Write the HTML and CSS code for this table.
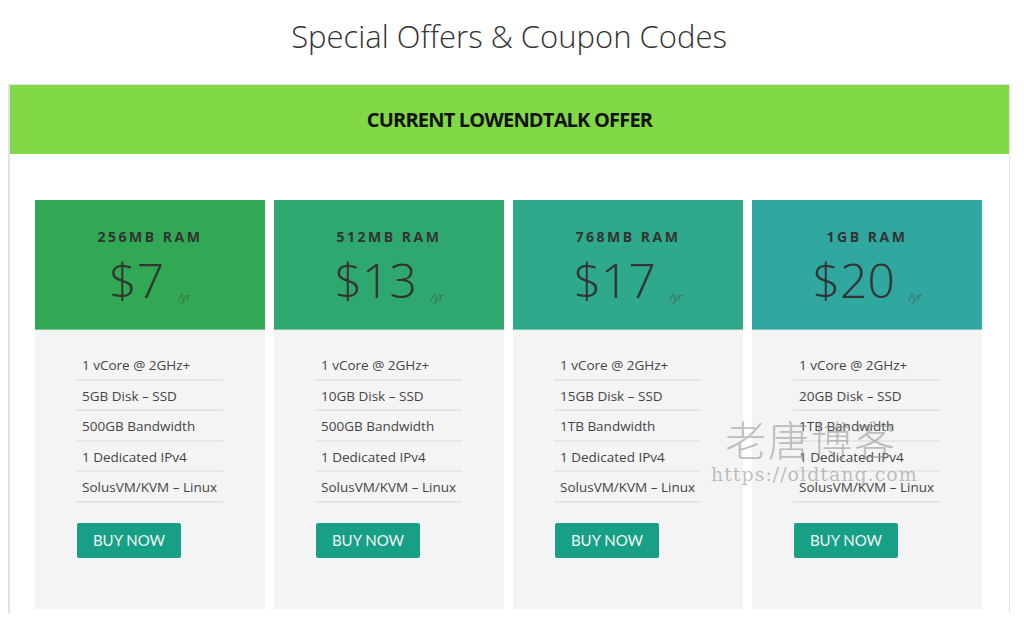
FILE: index.html
```html
<!DOCTYPE html>
<html>
<head>
<meta charset="utf-8">
<link rel="stylesheet" href="styles.css">
</head>
<body>
<div class="page">
  <h1 class="title">Special Offers &amp; Coupon Codes</h1>
  <div class="offer-box">
    <div class="band">CURRENT LOWENDTALK OFFER</div>
    <div class="plans">
      <div class="plan">
        <div class="plan-head c1">
          <div class="plan-name">256MB RAM</div>
          <div class="plan-price"><span class="amount">$7</span><span class="per">/yr</span></div>
        </div>
        <div class="plan-body">
          <ul class="features">
            <li>1 vCore @ 2GHz+</li>
            <li>5GB Disk – SSD</li>
            <li>500GB Bandwidth</li>
            <li>1 Dedicated IPv4</li>
            <li>SolusVM/KVM – Linux</li>
          </ul>
          <a class="buy">BUY NOW</a>
        </div>
      </div>
      <div class="plan">
        <div class="plan-head c2">
          <div class="plan-name">512MB RAM</div>
          <div class="plan-price"><span class="amount">$13</span><span class="per">/yr</span></div>
        </div>
        <div class="plan-body">
          <ul class="features">
            <li>1 vCore @ 2GHz+</li>
            <li>10GB Disk – SSD</li>
            <li>500GB Bandwidth</li>
            <li>1 Dedicated IPv4</li>
            <li>SolusVM/KVM – Linux</li>
          </ul>
          <a class="buy">BUY NOW</a>
        </div>
      </div>
      <div class="plan">
        <div class="plan-head c3">
          <div class="plan-name">768MB RAM</div>
          <div class="plan-price"><span class="amount">$17</span><span class="per">/yr</span></div>
        </div>
        <div class="plan-body">
          <ul class="features">
            <li>1 vCore @ 2GHz+</li>
            <li>15GB Disk – SSD</li>
            <li>1TB Bandwidth</li>
            <li>1 Dedicated IPv4</li>
            <li>SolusVM/KVM – Linux</li>
          </ul>
          <a class="buy">BUY NOW</a>
        </div>
      </div>
      <div class="plan">
        <div class="plan-head c4">
          <div class="plan-name">1GB RAM</div>
          <div class="plan-price"><span class="amount">$20</span><span class="per">/yr</span></div>
        </div>
        <div class="plan-body">
          <ul class="features">
            <li>1 vCore @ 2GHz+</li>
            <li>20GB Disk – SSD</li>
            <li>1TB Bandwidth</li>
            <li>1 Dedicated IPv4</li>
            <li>SolusVM/KVM – Linux</li>
          </ul>
          <a class="buy">BUY NOW</a>
        </div>
      </div>
    </div>
  </div>
</div>
<div class="watermark">
  <div class="wm-cn">老唐博客</div>
  <div class="wm-url">https://oldtang.com</div>
</div>
</body>
</html>
```

FILE: styles.css
```css
html, body {
  margin: 0;
  padding: 0;
  background: #fff;
}
body {
  font-family: "Open Sans", "Liberation Sans", sans-serif;
  color: #444;
  overflow: hidden;
}
.page {
  width: 1002px;
  margin-left: 8px;
}
.title {
  margin: 0;
  padding-top: 14px;
  height: 84px;
  box-sizing: border-box;
  text-align: center;
  font-weight: 300;
  font-size: 31px;
  line-height: 44px;
  color: #333;
}
.offer-box {
  border: 1px solid #e2e2e2;
  border-width: 1px 1px 0 2px;
}
.band {
  background: #81d943;
  height: 69px;
  line-height: 69px;
  text-align: center;
  font-weight: 700;
  font-size: 20px;
  color: #111;
  letter-spacing: -0.8px;
}
.plans {
  display: grid;
  grid-template-columns: repeat(4, 230px);
  column-gap: 9px;
  padding: 46px 0 4px 25px;
}
.plan-head {
  height: 130px;
  box-sizing: border-box;
  border-bottom: 1px solid rgba(255,255,255,0.35);
  text-align: center;
  color: #333;
  padding-top: 27px;
}
.c1 { background: #31a853; }
.c2 { background: #2fa870; }
.c3 { background: #2ea98b; }
.c4 { background: #30a89f; }
.plan-name {
  font-weight: 700;
  font-size: 14px;
  letter-spacing: 2.5px;
  line-height: 20px;
  color: #333;
}
.plan-price {
  margin-top: 4px;
  line-height: 58px;
  white-space: nowrap;
}
.amount {
  font-weight: 300;
  font-size: 48px;
  color: #333;
}
.per {
  display: inline-block;
  margin-left: 14px;
  font-size: 11px;
  font-style: italic;
  color: #4a4a4a;
  font-weight: 300;
  position: relative;
  top: 3px;
}
.plan-body {
  background: #f4f4f4;
  height: 279px;
  padding: 20px 0 0 41px;
  box-sizing: border-box;
}
.features {
  list-style: none;
  margin: 0;
  padding: 0;
  width: 147px;
}
.features li {
  height: 30.5px;
  line-height: 30px;
  box-sizing: border-box;
  border-bottom: 2px solid #e6e6e6;
  padding-left: 6px;
  font-size: 13.5px;
  color: #444;
  white-space: nowrap;
}
.buy {
  display: block;
  margin-top: 20px;
  margin-left: 1px;
  width: 104px;
  height: 35px;
  line-height: 35px;
  background: #17a085;
  border-radius: 2px;
  text-align: center;
  font-family: Lato, "Open Sans", sans-serif;
  font-size: 15px;
  color: #f2f6f5;
}
.watermark {
  position: absolute;
  left: 711px;
  top: 414px;
  pointer-events: none;
  color: rgba(140,140,140,0.55);
  text-align: center;
}
.wm-cn {
  font-family: "Noto Sans CJK SC", sans-serif;
  font-weight: 300;
  font-size: 41px;
  line-height: 48px;
  letter-spacing: 2px;
  padding-left: 14px;
  text-align: left;
}
.wm-url {
  font-family: "DejaVu Serif", "Liberation Serif", serif;
  font-size: 19px;
  line-height: 24px;
  letter-spacing: 1px;
}
```
